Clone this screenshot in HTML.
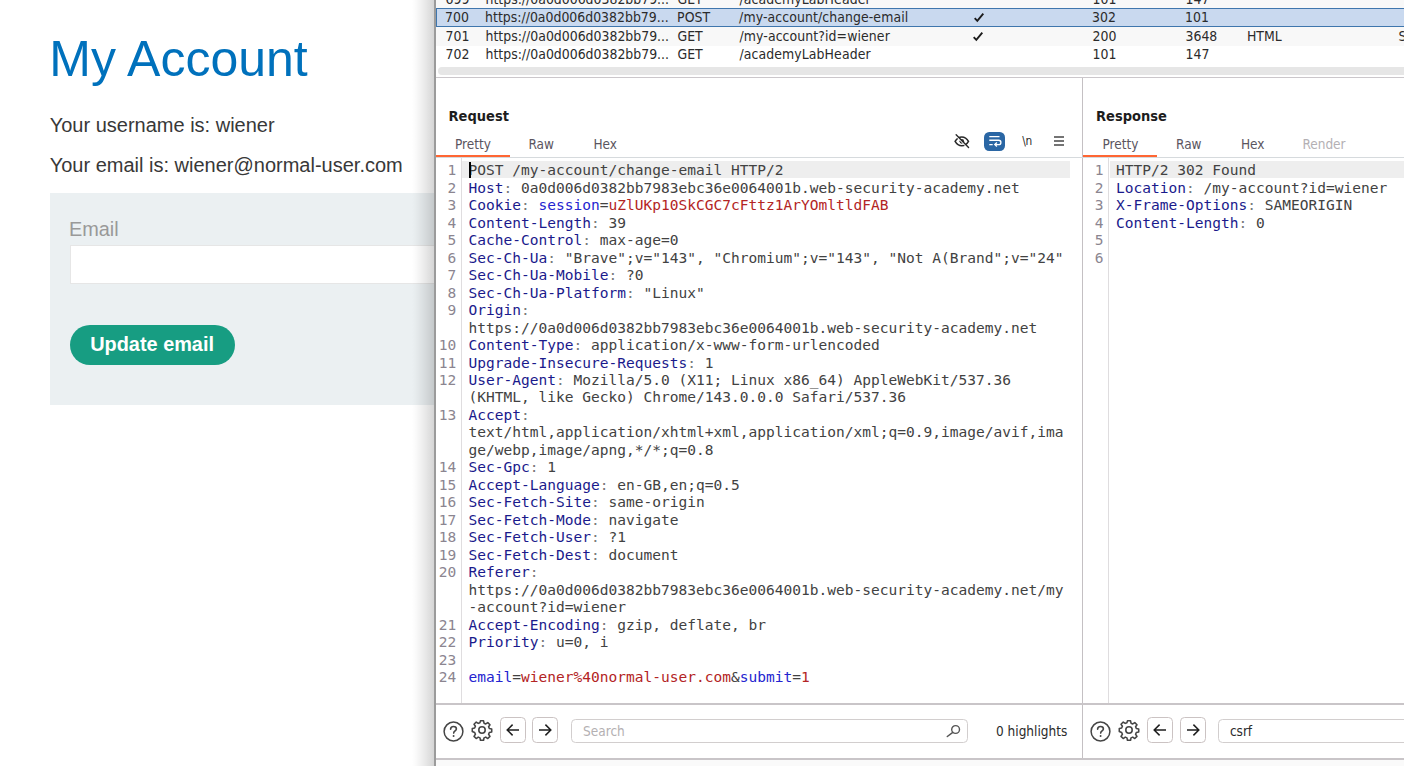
<!DOCTYPE html>
<html lang="en">
<head>
<meta charset="utf-8">
<title>My Account</title>
<style>
*{box-sizing:border-box;margin:0;padding:0}
html,body{width:1404px;height:766px;overflow:hidden;background:#fff}
body{position:relative;font-family:"Liberation Sans",Arial,sans-serif;color:#333}
.abs{position:absolute}
/* ---------- left web page ---------- */
#page h1{position:absolute;left:49.3px;top:30.2px;font-size:50px;line-height:58px;font-weight:400;color:#0071bc;white-space:nowrap}
#page p{position:absolute;left:49.700px;font-size:20px;line-height:23px;color:#383838;white-space:nowrap}
#formbox{position:absolute;left:49.5px;top:193.3px;width:420px;height:211.800px;background:#ebf0f2}
#formbox label{position:absolute;left:19.4px;top:24.6px;font-size:19.9px;line-height:23px;color:#999}
#formbox .inp{position:absolute;left:20.3px;top:51.6px;width:400px;height:39.4px;background:#fff;border:1px solid #e6e6e6}
#formbox .btn{position:absolute;left:20px;top:131.3px;width:165.2px;height:40.1px;border-radius:21px;background:#179d82;color:#fff;font-weight:700;font-size:19.9px;line-height:38.400px;text-align:center;white-space:nowrap}
/* ---------- burp window ---------- */
#shadow{position:absolute;left:412.400px;top:0;width:22px;height:766px;background:linear-gradient(to right,rgba(0,0,0,0) 0%,rgba(0,0,0,.025) 20%,rgba(0,0,0,.07) 50%,rgba(0,0,0,.125) 80%,rgba(0,0,0,.165) 100%)}
#edge{position:absolute;left:434.2px;top:0;width:2.2px;height:766px;background:#9b9b9b}
#burp{position:absolute;left:436.4px;top:0;width:968px;height:766px;background:#fff;overflow:hidden;font-family:"DejaVu Sans Condensed","DejaVu Sans","Liberation Sans",sans-serif;font-size:14px;color:#2b2b2b}
#burp .row{position:absolute;left:0;width:968px;height:18.5px;white-space:nowrap}
#burp .row span{position:absolute;top:0;line-height:18.5px;font-size:13.9px}
#burp .row.up span{top:-0.800px}
.c1{left:9.1px}.c2{left:49.1px}.c3{left:241.1px}.c4{left:303.1px;letter-spacing:.090px}.c5{left:535.5px}.c6{left:656.1px}.c7{left:749.1px}.c8{left:810.5px}.c9{left:962.1px}

/* ---------- message panes ---------- */
.ttl{position:absolute;top:106.1px;font-weight:700;font-size:14.500px;line-height:20px;color:#1c1c1c;white-space:nowrap}
.tab{position:absolute;top:134.1px;font-size:13.5px;line-height:20px;color:#5b5560;white-space:nowrap}
.tab.dis{color:#b4b0b4}
.orange{position:absolute;top:154.5px;height:2.6px;background:#ff6633}
.hline{position:absolute;height:1.4px;background:#c9c5c8}
.vline{position:absolute;width:1.4px;background:#c4c0c3}
.code{position:absolute;top:162.2px;font-family:"DejaVu Sans Mono","Liberation Mono",monospace;font-size:14.540px;line-height:17.49px;color:#424242;white-space:pre}
.code div{height:17.49px}
.nums{position:absolute;top:162.2px;width:20px;text-align:right;font-family:"DejaVu Sans Mono","Liberation Mono",monospace;font-size:14.540px;line-height:17.49px;color:#8b8590;white-space:pre}
.nums div{height:17.49px}
.h{color:#1a1a8c}.c{color:#7a7a7a}.n{color:#2424d0}.v{color:#b32424}
.hl{position:absolute;top:160.6px;height:17.6px;background:#eeeeee}
.gut{position:absolute;top:157.6px;width:1.2px;height:546.4px;background:#dfdddf}

/* ---------- icons / toolbars ---------- */
.ico{position:absolute;overflow:visible}
.nbtn{position:absolute;top:717.200px;width:26px;height:26px;border:1.1px solid #cbc3c3;border-radius:4.5px;background:#fff}
.sbox{position:absolute;top:718.8px;height:24.4px;border:1.1px solid #d2cece;border-radius:4.5px;background:#fff;font-size:13.5px;line-height:22.6px;padding-left:10.800px;white-space:nowrap}
.small{position:absolute;font-size:13.5px;line-height:20px;color:#2b2b2b;white-space:nowrap}
</style>
</head>
<body>
<div id="page">
  <h1>My Account</h1>
  <p style="top:113.6px">Your username is: wiener</p>
  <p style="top:153.6px">Your email is: wiener@normal-user.com</p>
  <div id="formbox">
    <label>Email</label>
    <div class="inp"></div>
    <div class="btn">Update email</div>
  </div>
</div>
<div id="shadow"></div>
<div id="edge"></div>
<div id="burp">
  <!-- table rows -->
  <div class="row up" style="top:-9.5px;background:#f8f8f8"><span class="c1">699</span><span class="c2">https://0a0d006d0382bb79...</span><span class="c3">GET</span><span class="c4">/academyLabHeader</span><span class="c6">101</span><span class="c7">147</span></div>
  <div class="row" style="top:8.4px;height:18.9px;background:#c9d9ef;border:1.400px solid #3f76ad;border-right:0"><span class="c1" style="top:-1.900px;margin-left:-1.400px">700</span><span class="c2" style="top:-1.900px;margin-left:-1.400px">https://0a0d006d0382bb79...</span><span class="c3" style="top:-1.900px;margin-left:-1.400px">POST</span><span class="c4" style="top:-1.900px;margin-left:-1.400px">/my-account/change-email</span><svg class="ico" role="img" aria-label="✓" style="left:535.6px;top:2.600px" width="12" height="11" viewBox="0 0 12 11"><title>✓</title><path d="M1.700 6.200L4.300 8.800L10.300 1.700" fill="none" stroke="#1c1c1c" stroke-width="1.900" stroke-linejoin="miter"/></svg><span class="c6" style="top:-1.900px;margin-left:-1.400px">302</span><span class="c7" style="top:-1.900px;margin-left:-1.400px">101</span></div>
  <div class="row" style="top:27.3px;background:#f8f8f8"><span class="c1">701</span><span class="c2">https://0a0d006d0382bb79...</span><span class="c3">GET</span><span class="c4">/my-account?id=wiener</span><svg class="ico" role="img" aria-label="✓" style="left:535.6px;top:3.300px" width="12" height="11" viewBox="0 0 12 11"><title>✓</title><path d="M1.700 6.200L4.300 8.800L10.300 1.700" fill="none" stroke="#1c1c1c" stroke-width="1.900" stroke-linejoin="miter"/></svg><span class="c6">200</span><span class="c7">3648</span><span class="c8">HTML</span><span class="c9">S</span></div>
  <div class="row up" style="top:45.8px;background:#fff"><span class="c1">702</span><span class="c2">https://0a0d006d0382bb79...</span><span class="c3">GET</span><span class="c4">/academyLabHeader</span><span class="c6">101</span><span class="c7">147</span></div>
  <!-- h scrollbar -->
  <div class="abs" style="left:2px;top:67.3px;width:980px;height:7.7px;border-radius:4px;background:#e6e6e6"></div>
  <div class="abs" style="left:0;top:76.8px;width:968px;height:1.6px;background:#cbc7cb"></div>

  <!-- pane chrome -->
  <div class="vline" style="left:645.6px;top:78px;height:682px"></div>
  <div class="ttl" style="left:12.2px">Request</div>
  <div class="ttl" style="left:659.6px">Response</div>
  <div class="tab" style="left:18.6px">Pretty</div>
  <div class="tab" style="left:92px">Raw</div>
  <div class="tab" style="left:157px">Hex</div>
  <div class="tab" style="left:666px">Pretty</div>
  <div class="tab" style="left:739.6px">Raw</div>
  <div class="tab" style="left:804.6px">Hex</div>
  <div class="tab dis" style="left:866px">Render</div>
  <div class="abs" style="left:0;top:157px;width:968px;height:1.2px;background:#d6dadd"></div>
  <div class="orange" style="left:0;width:73.4px"></div>
  <div class="orange" style="left:647px;width:73.6px"></div>
  <div class="hl" style="left:26px;width:607.6px"></div>
  <div class="hl" style="left:673.2px;width:300px"></div>
  <div class="gut" style="left:24.5px"></div>
  <div class="gut" style="left:671.8px"></div>
  <div class="hline" style="left:0;top:703.4px;width:968px"></div>
  <div class="hline" style="left:0;top:758.4px;width:968px"></div>
  <div class="abs" style="left:0;top:759.8px;width:968px;height:7px;background:#fafafa"></div>
  <div class="nums" style="left:-0.2px"><div>1</div><div>2</div><div>3</div><div>4</div><div>5</div><div>6</div><div>7</div><div>8</div><div>9</div><div>&nbsp;</div><div>10</div><div>11</div><div>12</div><div>&nbsp;</div><div>13</div><div>&nbsp;</div><div>&nbsp;</div><div>14</div><div>15</div><div>16</div><div>17</div><div>18</div><div>19</div><div>20</div><div>&nbsp;</div><div>&nbsp;</div><div>21</div><div>22</div><div>23</div><div>24</div></div>
  <div class="code" style="left:32.2px"><div>POST /my-account/change-email HTTP/2</div><div><span class="h">Host</span><span class="c">:</span> 0a0d006d0382bb7983ebc36e0064001b.web-security-academy.net</div><div><span class="h">Cookie</span><span class="c">:</span> <span class="n">session</span>=<span class="v">uZlUKp10SkCGC7cFttz1ArYOmltldFAB</span></div><div><span class="h">Content-Length</span><span class="c">:</span> 39</div><div><span class="h">Cache-Control</span><span class="c">:</span> max-age=0</div><div><span class="h">Sec-Ch-Ua</span><span class="c">:</span> &quot;Brave&quot;;v=&quot;143&quot;, &quot;Chromium&quot;;v=&quot;143&quot;, &quot;Not A(Brand&quot;;v=&quot;24&quot;</div><div><span class="h">Sec-Ch-Ua-Mobile</span><span class="c">:</span> ?0</div><div><span class="h">Sec-Ch-Ua-Platform</span><span class="c">:</span> &quot;Linux&quot;</div><div><span class="h">Origin</span><span class="c">:</span></div><div>https://0a0d006d0382bb7983ebc36e0064001b.web-security-academy.net</div><div><span class="h">Content-Type</span><span class="c">:</span> application/x-www-form-urlencoded</div><div><span class="h">Upgrade-Insecure-Requests</span><span class="c">:</span> 1</div><div><span class="h">User-Agent</span><span class="c">:</span> Mozilla/5.0 (X11; Linux x86_64) AppleWebKit/537.36</div><div>(KHTML, like Gecko) Chrome/143.0.0.0 Safari/537.36</div><div><span class="h">Accept</span><span class="c">:</span></div><div>text/html,application/xhtml+xml,application/xml;q=0.9,image/avif,ima</div><div>ge/webp,image/apng,*/*;q=0.8</div><div><span class="h">Sec-Gpc</span><span class="c">:</span> 1</div><div><span class="h">Accept-Language</span><span class="c">:</span> en-GB,en;q=0.5</div><div><span class="h">Sec-Fetch-Site</span><span class="c">:</span> same-origin</div><div><span class="h">Sec-Fetch-Mode</span><span class="c">:</span> navigate</div><div><span class="h">Sec-Fetch-User</span><span class="c">:</span> ?1</div><div><span class="h">Sec-Fetch-Dest</span><span class="c">:</span> document</div><div><span class="h">Referer</span><span class="c">:</span></div><div>https://0a0d006d0382bb7983ebc36e0064001b.web-security-academy.net/my</div><div>-account?id=wiener</div><div><span class="h">Accept-Encoding</span><span class="c">:</span> gzip, deflate, br</div><div><span class="h">Priority</span><span class="c">:</span> u=0, i</div><div>&nbsp;</div><div><span class="n">email</span>=<span class="v">wiener%40normal-user.com</span>&amp;<span class="n">submit</span>=<span class="v">1</span></div></div>
  <div class="nums" style="left:647px"><div>1</div><div>2</div><div>3</div><div>4</div><div>5</div><div>6</div></div>
  <div class="code" style="left:679.6px"><div>HTTP/2 302 Found</div><div><span class="h">Location</span><span class="c">:</span> /my-account?id=wiener</div><div><span class="h">X-Frame-Options</span><span class="c">:</span> SAMEORIGIN</div><div><span class="h">Content-Length</span><span class="c">:</span> 0</div><div>&nbsp;</div><div>&nbsp;</div></div>
  <svg class="ico" style="left:6.500px;top:720.500px" width="21" height="21" viewBox="0 0 21 21"><circle cx="10.5" cy="10.5" r="9.4" fill="none" stroke="#454545" stroke-width="1.5"/><path d="M7.6 8.3c0-1.7 1.3-2.8 2.9-2.8s2.9 1 2.9 2.5c0 1.9-2.7 2.1-2.7 4.1" fill="none" stroke="#454545" stroke-width="1.600" stroke-linecap="round"/><circle cx="10.6" cy="15" r="0.95" fill="#454545"/></svg>
  <svg class="ico" style="left:34.4px;top:719px" width="22" height="22" viewBox="0 0 24 24"><path fill="none" stroke="#454545" stroke-width="1.7" stroke-linejoin="round" d="M10.3 2h3.4l.5 2.6 1.9.8 2.2-1.5 2.4 2.4-1.5 2.2.8 1.9 2.6.5v3.4l-2.6.5-.8 1.9 1.5 2.2-2.4 2.4-2.2-1.5-1.9.8-.5 2.6h-3.4l-.5-2.6-1.9-.8-2.2 1.5-2.4-2.4 1.5-2.2-.8-1.9L1.400 13.700v-3.400l2.600-.5.8-1.9-1.5-2.2 2.400-2.400 2.200 1.500 1.900-.8z"/><circle cx="12" cy="12" r="3.5" fill="none" stroke="#454545" stroke-width="1.7"/></svg>
  <div class="nbtn" style="left:63.7px"></div>
  <div class="nbtn" style="left:96.0px"></div>
  <svg class="ico" style="left:69.4px;top:723.4px" width="14" height="14" viewBox="0 0 14 14"><path d="M13 7H1.400M6.600 1.600L1.200 7l5.400 5.400" fill="none" stroke="#1e1e1e" stroke-width="1.5"/></svg>
  <svg class="ico" style="left:101.8px;top:723.4px" width="14" height="14" viewBox="0 0 14 14"><path d="M1 7h11.600M7.400 1.600L12.800 7l-5.400 5.400" fill="none" stroke="#1e1e1e" stroke-width="1.5"/></svg>
  <div class="sbox" style="left:134.9px;width:396.4px;color:#b4b0b2">Search</div>
  <svg class="ico" style="left:508px;top:722px" width="18" height="18" viewBox="0 0 18 18"><circle cx="11.6" cy="7.5" r="3.9" fill="none" stroke="#555" stroke-width="1.4"/><path d="M8.800 10.300L3.300 14.500" stroke="#555" stroke-width="1.5" stroke-linecap="round"/></svg>
  <div class="small" style="left:559.6px;top:720.6px">0 highlights</div>
  <svg class="ico" style="left:653.900px;top:720.600px" width="21" height="21" viewBox="0 0 21 21"><circle cx="10.5" cy="10.5" r="9.4" fill="none" stroke="#454545" stroke-width="1.5"/><path d="M7.6 8.3c0-1.7 1.3-2.8 2.9-2.8s2.9 1 2.9 2.5c0 1.9-2.7 2.1-2.7 4.1" fill="none" stroke="#454545" stroke-width="1.600" stroke-linecap="round"/><circle cx="10.6" cy="15" r="0.95" fill="#454545"/></svg>
  <svg class="ico" style="left:681.8px;top:719px" width="22" height="22" viewBox="0 0 24 24"><path fill="none" stroke="#454545" stroke-width="1.7" stroke-linejoin="round" d="M10.3 2h3.4l.5 2.6 1.9.8 2.2-1.5 2.4 2.4-1.5 2.2.8 1.9 2.6.5v3.4l-2.6.5-.8 1.9 1.5 2.2-2.4 2.4-2.2-1.5-1.9.8-.5 2.6h-3.4l-.5-2.6-1.9-.8-2.2 1.5-2.4-2.4 1.5-2.2-.8-1.9L1.400 13.700v-3.400l2.600-.5.8-1.9-1.5-2.2 2.400-2.400 2.200 1.500 1.900-.8z"/><circle cx="12" cy="12" r="3.5" fill="none" stroke="#454545" stroke-width="1.7"/></svg>
  <div class="nbtn" style="left:711.1px"></div>
  <div class="nbtn" style="left:743.4px"></div>
  <svg class="ico" style="left:716.8px;top:723.4px" width="14" height="14" viewBox="0 0 14 14"><path d="M13 7H1.400M6.600 1.600L1.200 7l5.400 5.400" fill="none" stroke="#1e1e1e" stroke-width="1.5"/></svg>
  <svg class="ico" style="left:749.2px;top:723.4px" width="14" height="14" viewBox="0 0 14 14"><path d="M1 7h11.600M7.400 1.600L12.800 7l-5.400 5.400" fill="none" stroke="#1e1e1e" stroke-width="1.5"/></svg>
  <div class="sbox" style="left:781.700px;width:400.0px;color:#2b2b2b">csrf</div>
  <svg class="ico" style="left:516.6px;top:133.2px" width="17.6" height="16.700" viewBox="0 0 19 18"><path d="M2.300 9c1.700-3 4.300-4.700 7.200-4.700s5.500 1.700 7.200 4.700c-1.700 3-4.300 4.700-7.200 4.700S4 12 2.300 9z" fill="none" stroke="#2a2a2a" stroke-width="1.700"/><circle cx="9.500" cy="9" r="2.500" fill="#2a2a2a"/><path d="M2.600 2.600L16 16.400" stroke="#fff" stroke-width="1.300"/><path d="M3.400 1.800L16.800 15.600" stroke="#2a2a2a" stroke-width="1.500" stroke-linecap="round"/></svg>
  <div class="abs" style="left:548px;top:132px;width:20.2px;height:19.100px;border-radius:5.200px;background:#2a66a4"></div>
  <svg class="ico" style="left:548.2px;top:132px" width="20" height="19" viewBox="0 0 20 19"><path d="M4.300 4.600h10.200M4.300 8.200h9.300c1.500 0 2.300.9 2.300 2.200s-.8 2.200-2.300 2.200h-3M4.300 12.600h3.400" fill="none" stroke="#fff" stroke-width="1.350"/><path d="M11.900 10.600L9.800 12.600l2.100 2" fill="none" stroke="#fff" stroke-width="1.350"/></svg>
  <div class="abs" style="left:585.8px;top:131.5px;font-size:11.800px;line-height:18px;color:#2b2b2b;letter-spacing:-0.200px">\n</div>
  <div class="abs" style="left:617.8px;top:136px;width:10.100px;height:1.800px;background:#747474"></div><div class="abs" style="left:617.8px;top:140.200px;width:10.100px;height:1.800px;background:#747474"></div><div class="abs" style="left:617.8px;top:144.200px;width:10.100px;height:1.800px;background:#747474"></div>
  <div class="abs" style="left:32.2px;top:161.6px;width:2.100px;height:16.600px;background:#000"></div>
</div>
</body>
</html>
